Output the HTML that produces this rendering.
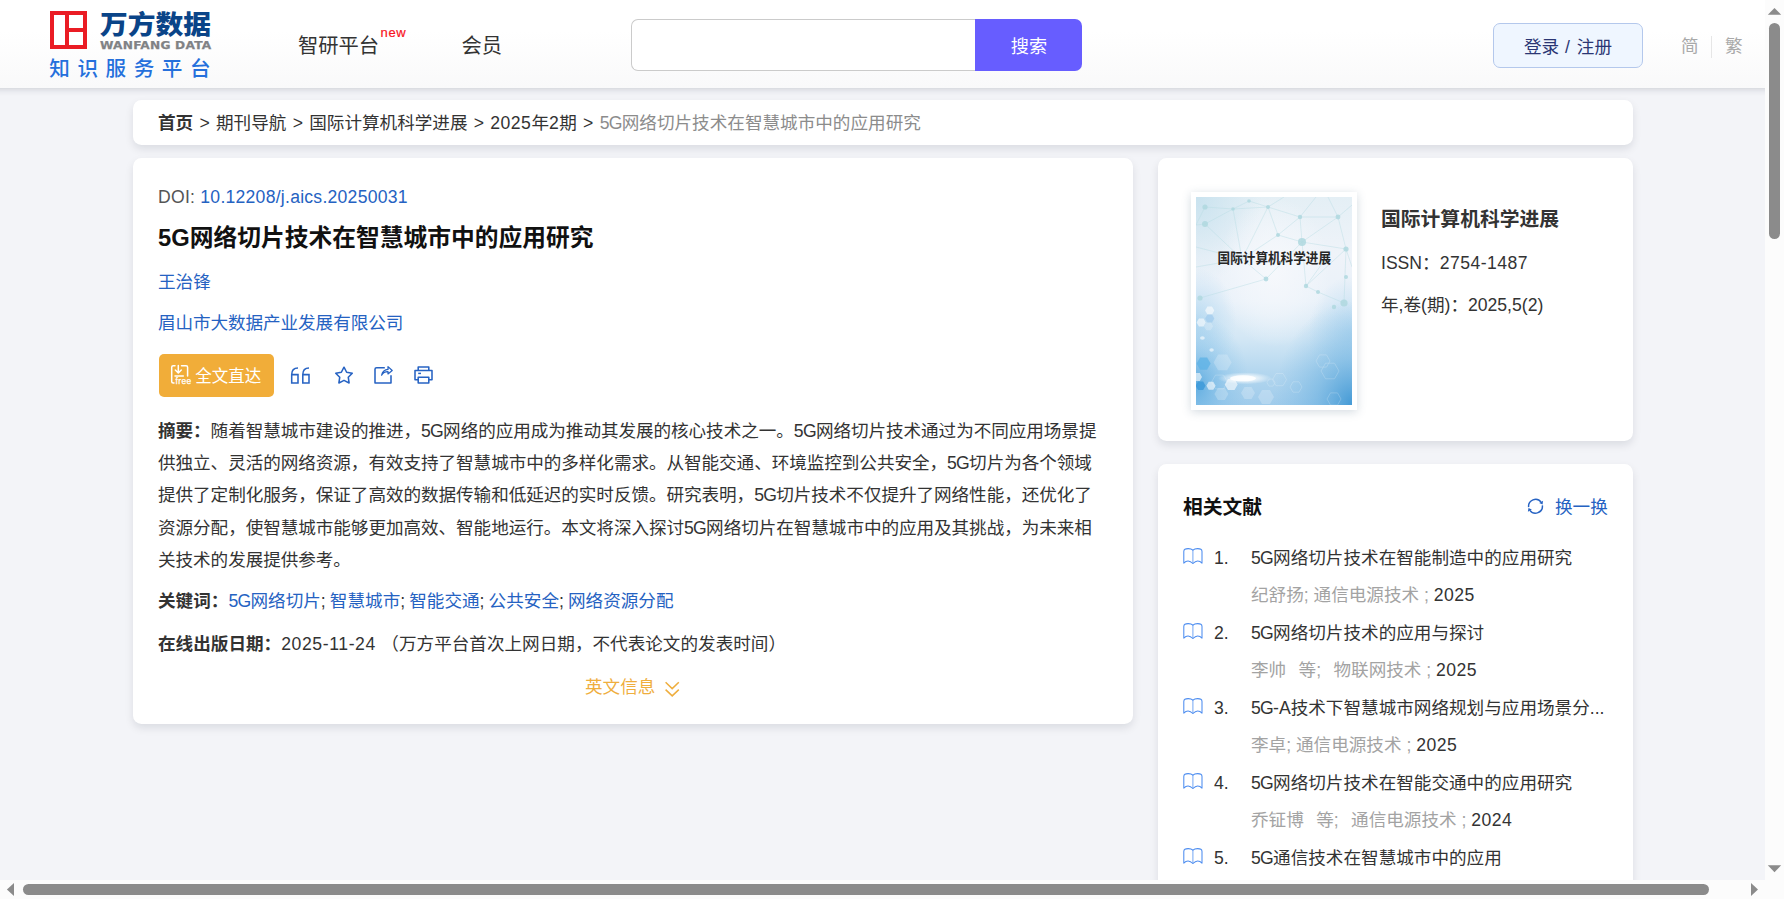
<!DOCTYPE html>
<html lang="zh-CN">
<head>
<meta charset="utf-8">
<title>5G网络切片技术在智慧城市中的应用研究</title>
<style>
*{box-sizing:border-box;margin:0;padding:0}
html,body{width:1784px;height:899px;overflow:hidden}
body{position:relative;background:#fcfcfc;font-family:"Liberation Sans","Noto Sans CJK SC",sans-serif;color:#333;font-size:17.6px}
a{text-decoration:none;color:inherit}
.abs{position:absolute;white-space:nowrap}
#view{position:absolute;left:0;top:0;width:1765px;height:880px;overflow:hidden;background:#f3f4f8}
#hbg{position:absolute;left:-30px;top:0;width:1825px;height:88px;background:linear-gradient(#ffffff 0%,#ffffff 35%,#f9f9fa 100%);box-shadow:0 1px 7px rgba(35,40,60,.2)}
#header{position:absolute;left:0;top:0;width:1765px;height:88px}
.card{position:absolute;background:#fff;border-radius:8.5px;box-shadow:0 4px 9px rgba(10,20,40,.1)}
.blue{color:#2562c2}
.gray{color:#a3a3a3}
b,.b{font-weight:700}
.rn,.rt,.rs{line-height:30px;color:#333}
.rn,.rt{margin-top:.9px}
.rs{color:#a3a3a3}
.dk{color:#333}
.sp{display:inline-block;width:12.4px}
.g{letter-spacing:-.7px}
.d{letter-spacing:.47px}
.sep{display:inline-block;width:22.8px;text-align:center}
</style>
</head>
<body>
<div id="view">

<!-- ===== header ===== -->
<div id="hbg"></div>
<div id="header">
  <!-- logo -->
  <div class="abs" style="left:50px;top:11px;width:37px;height:38px;border:4px solid #ea1c24;background:#fff">
    <div class="abs" style="left:11px;top:0;width:4px;height:30px;background:#ea1c24"></div>
    <div class="abs" style="left:15px;top:13px;width:14px;height:4px;background:#ea1c24"></div>
  </div>
  <div class="abs" id="lg1" style="left:99.5px;top:4.6px;font-size:25.6px;line-height:40px;font-weight:900;color:#0a4488;transform:scaleX(1.085);transform-origin:0 0">万方数据</div>
  <div class="abs" id="lg2" style="left:100px;top:37.8px;font-family:'DejaVu Sans',sans-serif;font-size:10.8px;line-height:16px;font-weight:700;color:#808285;letter-spacing:.2px;transform:scaleX(1.128);transform-origin:0 0;-webkit-text-stroke:.25px #808285">WANFANG DATA</div>
  <div class="abs" id="lg3" style="left:49.3px;top:54px;font-size:20.6px;line-height:30px;color:#2570dc;letter-spacing:7.55px;font-weight:500">知识服务平台</div>

  <div class="abs" id="nav1" style="left:298px;top:30.7px;font-size:20.3px;line-height:30px;color:#333">智研平台</div>
  <div class="abs" id="navnew" style="left:380.6px;top:24.7px;font-size:13px;line-height:16px;color:#f8131c;letter-spacing:.65px;-webkit-text-stroke:.2px #f8131c">new</div>
  <div class="abs" id="nav2" style="left:461.4px;top:30.7px;font-size:20.3px;line-height:30px;color:#333">会员</div>

  <div class="abs" style="left:631px;top:19px;width:346px;height:52px;border:1px solid #cbcbcb;border-right:none;border-radius:7px 0 0 7px;background:#fff"></div>
  <div class="abs" id="sbtn" style="left:975.4px;top:19px;width:107.1px;height:52px;border-radius:0 7px 7px 0;background:#675dff;color:#fff;font-size:18.2px;line-height:56.2px;text-align:center">搜索</div>

  <div class="abs" id="login" style="left:1493px;top:23px;width:150px;height:45px;border:1px solid #b4c8ec;border-radius:7px;background:#eff6ff;color:#2b3674;font-size:17.6px;line-height:46px;text-align:center">登录<span style="letter-spacing:1px"> / </span>注册</div>
  <div class="abs" id="jian" style="left:1681px;top:31px;font-size:17.6px;line-height:30px;color:#a9a9a9">简</div>
  <div class="abs" style="left:1711px;top:36px;width:1px;height:22px;background:#e6e6e6"></div>
  <div class="abs" id="fan" style="left:1725px;top:31px;font-size:17.6px;line-height:30px;color:#a9a9a9">繁</div>
</div>

<!-- ===== breadcrumb ===== -->
<div class="card" id="bc" style="left:133px;top:100px;width:1500px;height:44.5px">
  <div class="abs" id="bctext" style="left:25px;top:8px;font-size:17.6px;line-height:30px;color:#333"><b>首页</b><span class="sep">&gt;</span>期刊导航<span class="sep">&gt;</span>国际计算机科学进展<span class="sep">&gt;</span><span class="d">2025</span>年<span class="d">2</span>期<span class="sep">&gt;</span><span style="color:#8c8c8c"><span class="g">5G</span>网络切片技术在智慧城市中的应用研究</span></div>
</div>

<!-- ===== main card ===== -->
<div class="card" id="main" style="left:133px;top:158px;width:1000px;height:566px">
  <div class="abs" id="doi" style="left:25px;top:24px;line-height:30px;color:#555"><span style="letter-spacing:.25px">DOI: </span><span class="blue" style="letter-spacing:.25px">10.12208/j.aics.20250031</span></div>
  <div class="abs" id="title" style="left:25px;top:60px;font-size:23.76px;line-height:40px;font-weight:700;color:#111">5G网络切片技术在智慧城市中的应用研究</div>
  <div class="abs blue" id="author" style="left:25px;top:109px;line-height:30px">王治锋</div>
  <div class="abs blue" id="org" style="left:25px;top:150.2px;line-height:30px;letter-spacing:-.08px">眉山市大数据产业发展有限公司</div>

  <div class="abs" id="ftbtn" style="left:26px;top:196px;width:115px;height:43px;border-radius:5px;background:#f1ad39"></div>
  <svg class="abs" style="left:37px;top:206px" width="24" height="22" viewBox="0 0 24 22" fill="none" stroke="#fff" stroke-width="1.5" stroke-linecap="round" stroke-linejoin="round">
    <path d="M5 1.8H3.2Q1.7 1.8 1.7 3.3V17.6Q1.7 19.1 3.2 19.1H4"/>
    <path d="M11.5 1.8H16.1Q17.6 1.8 17.6 3.3V12"/>
    <path d="M8.3 1.5V8.6M5.3 6L8.3 9L11.3 6M5 12H13.3"/>
    <text x="5.5" y="19.9" font-family="Liberation Sans, sans-serif" font-size="8.4" font-weight="400" fill="#fff" stroke="#fff" stroke-width=".25" letter-spacing=".4">free</text>
  </svg>
  <div class="abs" id="fttext" style="left:62.3px;top:202.8px;font-size:16.5px;line-height:30px;color:#fff">全文直达</div>

  <!-- quote -->
  <svg class="abs" style="left:156px;top:207px" width="24" height="22" viewBox="0 0 24 22" fill="none" stroke="#2763c3" stroke-width="1.55">
    <path d="M9 2.9Q2.7 2.9 2.7 9.6V17.9H9V9.6H2.7"/>
    <path d="M20 2.9Q13.8 2.9 13.8 9.6V17.9H20V9.6H13.8"/>
  </svg>
  <!-- star -->
  <svg class="abs" style="left:200px;top:206px" width="24" height="24" viewBox="0 0 24 24" fill="none" stroke="#2763c3" stroke-width="1.55" stroke-linejoin="round">
    <path d="M11.00 3.20L13.65 8.26L19.27 9.21L15.28 13.29L16.11 18.94L11.00 16.40L5.89 18.94L6.72 13.29L2.73 9.21L8.35 8.26Z"/>
  </svg>
  <!-- share -->
  <svg class="abs" style="left:240px;top:206px" width="24" height="24" viewBox="0 0 24 24" fill="none" stroke="#2763c3" stroke-width="1.55" stroke-linejoin="round">
    <path d="M11.8 3.7H3.6Q2 3.7 2 5.3V19H18V11.2"/>
    <path d="M8.6 11.2Q10 5.6 15 5.4V2.6L19.2 6.5L15 9.9V7.6Q11 7.4 8.6 11.2Z" stroke-width="1.25"/>
  </svg>
  <!-- print -->
  <svg class="abs" style="left:280px;top:206px" width="24" height="24" viewBox="0 0 24 24" fill="none" stroke="#2763c3" stroke-width="1.55" stroke-linejoin="round">
    <path d="M5.2 6.5V3H15.8V6.5"/>
    <path d="M5.2 15.8H2V6.5H19V15.8H15.8"/>
    <path d="M5.2 13.3H15.8V19H5.2Z"/>
    <path d="M5.2 9.4H8" stroke-width="1.5"/>
  </svg>

  <div class="abs" id="abs" style="left:25px;top:256.5px;width:950px;white-space:normal;line-height:32.45px;color:#333;text-align:left;letter-spacing:-.06px"><b>摘要：</b>随着智慧城市建设的推进，<span class="g">5G</span>网络的应用成为推动其发展的核心技术之一。<span class="g">5G</span>网络切片技术通过为不同应用场景提供独立、灵活的网络资源，有效支持了智慧城市中的多样化需求。从智能交通、环境监控到公共安全，<span class="g">5G</span>切片为各个领域提供了定制化服务，保证了高效的数据传输和低延迟的实时反馈。研究表明，<span class="g">5G</span>切片技术不仅提升了网络性能，还优化了资源分配，使智慧城市能够更加高效、智能地运行。本文将深入探讨<span class="g">5G</span>网络切片在智慧城市中的应用及其挑战，为未来相关技术的发展提供参考。</div>

  <div class="abs" id="kw" style="left:25px;top:427.4px;line-height:32.45px"><b>关键词：</b><span class="blue"><span class="g">5G</span>网络切片</span><span style="letter-spacing:-.4px">; </span><span class="blue">智慧城市</span><span style="letter-spacing:-.4px">; </span><span class="blue">智能交通</span><span style="letter-spacing:-.4px">; </span><span class="blue">公共安全</span><span style="letter-spacing:-.4px">; </span><span class="blue">网络资源分配</span></div>
  <div class="abs" id="date" style="left:25px;top:470px;line-height:32.45px"><b>在线出版日期：</b><span style="letter-spacing:.6px">2025-11-24 </span>（万方平台首次上网日期，不代表论文的发表时间）</div>

  <div class="abs" id="enin" style="left:452px;top:514px;line-height:30px;color:#efae3e">英文信息</div>
  <svg class="abs" style="left:530px;top:522px" width="18" height="18" viewBox="0 0 18 18" fill="none" stroke="#efae3e" stroke-width="1.5">
    <path d="M2.6 2.3L9.2 8.6L15.8 2.3M2.6 9.6L9.2 15.9L15.8 9.6"/>
  </svg>
</div>

<!-- ===== journal card ===== -->
<div class="card" id="jc" style="left:1158px;top:158px;width:475px;height:283px">
  <div class="abs" style="left:33px;top:34px;width:166px;height:218px;background:#fff;box-shadow:0 2px 9px rgba(60,90,120,.22)"></div>
  <svg class="abs" id="cover" style="left:38px;top:39px" width="156" height="208" viewBox="0 0 156 208">
    <defs>
      <linearGradient id="cg" x1="0" y1="0" x2="0" y2="1">
        <stop offset="0" stop-color="#e4eff5"/>
        <stop offset="0.28" stop-color="#eff3f9"/>
        <stop offset="0.5" stop-color="#e9f1f9"/>
        <stop offset="0.68" stop-color="#d3e7f5"/>
        <stop offset="0.84" stop-color="#b4d7ef"/>
        <stop offset="1" stop-color="#9fcbeb"/>
      </linearGradient>
      <radialGradient id="cw" cx="0.5" cy="0.36" r="0.36">
        <stop offset="0" stop-color="#f7f9fc" stop-opacity=".9"/>
        <stop offset="0.6" stop-color="#f5f8fc" stop-opacity=".5"/>
        <stop offset="1" stop-color="#f5f8fc" stop-opacity="0"/>
      </radialGradient>
      <radialGradient id="ctl" cx="0" cy="0" r="0.42">
        <stop offset="0" stop-color="#c6e1ee" stop-opacity=".9"/>
        <stop offset="1" stop-color="#c6e1ee" stop-opacity="0"/>
      </radialGradient>
      <radialGradient id="cbr" cx="1" cy="1" r="0.5">
        <stop offset="0" stop-color="#3f97d4" stop-opacity=".95"/>
        <stop offset="0.45" stop-color="#62acde" stop-opacity=".5"/>
        <stop offset="1" stop-color="#7cbbe6" stop-opacity="0"/>
      </radialGradient>
      <radialGradient id="cbl" cx="0" cy="0.9" r="0.34">
        <stop offset="0" stop-color="#52a6de" stop-opacity=".85"/>
        <stop offset="0.55" stop-color="#7cbde8" stop-opacity=".4"/>
        <stop offset="1" stop-color="#8cc5ea" stop-opacity="0"/>
      </radialGradient>
      <radialGradient id="cml" cx="0" cy="0.6" r="0.26">
        <stop offset="0" stop-color="#aad4ef" stop-opacity=".75"/>
        <stop offset="1" stop-color="#aad4ef" stop-opacity="0"/>
      </radialGradient>
      <radialGradient id="cmr" cx="1" cy="0.66" r="0.28">
        <stop offset="0" stop-color="#a8d2ee" stop-opacity=".7"/>
        <stop offset="1" stop-color="#a8d2ee" stop-opacity="0"/>
      </radialGradient>
      <radialGradient id="cglow" cx="0.5" cy="0.5" r="0.5">
        <stop offset="0" stop-color="#ffffff" stop-opacity="1"/>
        <stop offset="0.5" stop-color="#ffffff" stop-opacity=".6"/>
        <stop offset="1" stop-color="#ffffff" stop-opacity="0"/>
      </radialGradient>
    </defs>
    <rect width="156" height="208" fill="url(#cg)"/>
    <rect width="156" height="208" fill="url(#ctl)"/>
    <rect width="156" height="208" fill="url(#cml)"/>
    <rect width="156" height="208" fill="url(#cmr)"/>
    <rect width="156" height="208" fill="url(#cw)"/>
    <rect width="156" height="208" fill="url(#cbl)"/>
    <rect width="156" height="208" fill="url(#cbr)"/>
    <ellipse cx="49" cy="181.3" rx="27" ry="6" fill="url(#cglow)"/><ellipse cx="47" cy="181.3" rx="13" ry="3" fill="#fff" opacity=".85"/>
    <g stroke="#b4dae1" stroke-width=".7" fill="none" opacity=".6">
      <path d="M9 10L37 12L72 10L104 20L142 20L156 8M9 10L0 28L9 27L37 12L53 4L72 10L88 0M104 20L120 0M142 20L132 0M9 27L46 62L72 10M37 12L46 62L82 38L104 20L106 45L142 20L150 52L106 45L82 38L72 10M46 62L0 70M46 62L70 82L106 45L110 89L150 52L156 70M70 82L4 101M110 89L122 95L148 106L150 52M110 89L128 64M0 50L46 62"/>
    </g>
    <g fill="#b0d9e0" opacity=".85">
      <circle cx="9" cy="10" r="2.6"/><circle cx="37" cy="12" r="1.8"/><circle cx="72" cy="10" r="2"/><circle cx="104" cy="20" r="2.2"/><circle cx="142" cy="20" r="2.4"/>
      <circle cx="9" cy="27" r="3"/><circle cx="53" cy="4" r="1.8"/><circle cx="82" cy="38" r="2"/><circle cx="106" cy="45" r="4"/><circle cx="150" cy="52" r="2.6"/>
      <circle cx="70" cy="82" r="2.4"/><circle cx="110" cy="89" r="2.2"/><circle cx="122" cy="95" r="2"/><circle cx="148" cy="106" r="3.6"/><circle cx="4" cy="101" r="2.6"/><circle cx="128" cy="64" r="1.6"/><circle cx="150" cy="80" r="2"/><circle cx="138" cy="110" r="2.2"/>
    </g>
    <g fill="#ffffff" opacity=".6"><path d="M18.3 113.4L16.0 117.4L11.4 117.4L9.1 113.4L11.4 109.4L16.0 109.4Z"/><path d="M9.8 125.6L7.5 129.6L2.9 129.6L0.6 125.6L2.9 121.6L7.5 121.6Z"/><path d="M19.6 188.7L17.3 192.7L12.7 192.7L10.4 188.7L12.7 184.7L17.3 184.7Z"/><path d="M41.7 187.5L38.5 193.1L32.0 193.1L28.7 187.5L31.9 181.9L38.5 181.9Z"/><path d="M6.0 180.0L3.8 183.9L-0.7 183.9L-3.0 180.0L-0.8 176.1L3.8 176.1Z"/><ellipse cx="6.4" cy="141" rx="2.4" ry="1.8"/><ellipse cx="15.6" cy="153" rx="2.2" ry="1.8"/></g>
    <g fill="#ffffff" opacity=".22"><path d="M17.1 129.3L14.8 133.3L10.2 133.3L7.9 129.3L10.2 125.3L14.8 125.3Z"/><path d="M35.6 165.4L31.1 173.2L22.1 173.2L17.6 165.4L22.1 157.6L31.1 157.6Z"/><path d="M32.4 197.0L28.9 203.1L21.9 203.1L18.4 197.0L21.9 190.9L28.9 190.9Z"/><path d="M78.0 200.0L74.0 206.9L66.0 206.9L62.0 200.0L66.0 193.1L74.0 193.1Z"/><path d="M59.0 196.0L55.5 202.1L48.5 202.1L45.0 196.0L48.5 189.9L55.5 189.9Z"/></g>
    <g fill="#9fcbec" opacity=".7"><path d="M18.3 121.4L16.0 125.4L11.4 125.4L9.1 121.4L11.4 117.4L16.0 117.4Z"/></g>
    <path d="M14.6 166.6L11.1 172.7L4.1 172.7L0.6 166.6L4.1 160.5L11.1 160.5Z" fill="#5fb3e6" opacity="0.8"/><path d="M9.6 188.7L7.1 193.0L2.1 193.0L-0.4 188.7L2.1 184.4L7.1 184.4Z" fill="#3d9ad9" opacity="0.85"/>
    <g fill="none" stroke="#ffffff" stroke-width=".7" opacity=".28"><path d="M31.5 185.0L27.5 191.9L19.5 191.9L15.5 185.0L19.5 178.1L27.5 178.1Z"/><path d="M90.5 182.6L87.0 188.7L80.0 188.7L76.5 182.6L80.0 176.5L87.0 176.5Z"/><path d="M79.0 185.6L77.0 189.1L73.0 189.1L71.0 185.6L73.0 182.1L77.0 182.1Z"/><path d="M134.0 164.0L130.5 170.1L123.5 170.1L120.0 164.0L123.5 157.9L130.5 157.9Z"/><path d="M143.0 174.0L138.5 181.8L129.5 181.8L125.0 174.0L129.5 166.2L138.5 166.2Z"/><path d="M145.0 202.0L141.5 208.1L134.5 208.1L131.0 202.0L134.5 195.9L141.5 195.9Z"/><path d="M106.0 190.0L103.0 195.2L97.0 195.2L94.0 190.0L97.0 184.8L103.0 184.8Z"/></g>
    <text x="21.6" y="65.7" textLength="113.4" lengthAdjust="spacingAndGlyphs" font-family="Liberation Sans, Noto Sans CJK SC, sans-serif" font-size="13.8" font-weight="700" fill="#262626">国际计算机科学进展</text>
  </svg>

  <div class="abs" id="jn" style="left:223px;top:46px;font-size:19.8px;line-height:30px;font-weight:700;color:#333">国际计算机科学进展</div>
  <div class="abs" id="issn" style="left:223px;top:90px;line-height:30px;color:#333">ISSN：<span class="d">2754-1487</span></div>
  <div class="abs" id="yv" style="left:223px;top:132px;line-height:30px;color:#333">年,卷(期)：2025,5(2)</div>
</div>

<!-- ===== related card ===== -->
<div class="card" id="rc" style="left:1158px;top:464px;width:475px;height:470px">
  <div class="abs" id="rh" style="left:25px;top:28px;font-size:19.8px;line-height:30px;font-weight:700;color:#111">相关文献</div>
  <svg class="abs" style="left:368px;top:33.4px" width="19" height="19" viewBox="0 0 19 19" fill="none" stroke="#2763c3" stroke-width="1.45">
    <path d="M2.65 10.09A6.9 6.9 0 0 1 15.08 5.19"/>
    <path d="M16.35 8.41A6.9 6.9 0 0 1 3.92 13.31"/>
    <path d="M16.53 7.62L17.10 3.82L13.21 6.07Z" fill="#2763c3" stroke="none"/>
    <path d="M2.47 10.88L1.90 14.68L5.79 12.43Z" fill="#2763c3" stroke="none"/>
  </svg>
  <div class="abs blue" id="hyh" style="left:397px;top:27.8px;line-height:30px">换一换</div>

  <svg class="abs bk" style="left:25.2px;top:84.4px" width="21" height="18" viewBox="0 0 21 18" fill="none" stroke="#4d8df0" stroke-width="1.05" stroke-linejoin="round"><path d="M9.9 2.1Q8.3 0.6 5.2 0.6Q0.8 0.6 0.8 3.4V15.1Q5 10.6 9.9 15.5Q14.8 10.6 19 15.1V3.4Q19 0.6 14.6 0.6Q11.5 0.6 9.9 2.1Z"/><path d="M9.9 2.1V15.5" stroke-opacity=".75"/></svg>
  <div class="abs rn" style="left:56px;top:78px">1.</div>
  <div class="abs rt" style="left:93px;top:78px"><span class="g">5G</span>网络切片技术在智能制造中的应用研究</div>
  <div class="abs rs" style="left:93px;top:115.5px">纪舒扬; 通信电源技术 ; <span class="dk d">2025</span></div>
  <svg class="abs bk" style="left:25.2px;top:159.4px" width="21" height="18" viewBox="0 0 21 18" fill="none" stroke="#4d8df0" stroke-width="1.05" stroke-linejoin="round"><path d="M9.9 2.1Q8.3 0.6 5.2 0.6Q0.8 0.6 0.8 3.4V15.1Q5 10.6 9.9 15.5Q14.8 10.6 19 15.1V3.4Q19 0.6 14.6 0.6Q11.5 0.6 9.9 2.1Z"/><path d="M9.9 2.1V15.5" stroke-opacity=".75"/></svg>
  <div class="abs rn" style="left:56px;top:153px">2.</div>
  <div class="abs rt" style="left:93px;top:153px"><span class="g">5G</span>网络切片技术的应用与探讨</div>
  <div class="abs rs" style="left:93px;top:190.5px">李帅<span class="sp"></span>等;<span class="sp"></span>物联网技术 ; <span class="dk d">2025</span></div>
  <svg class="abs bk" style="left:25.2px;top:234.4px" width="21" height="18" viewBox="0 0 21 18" fill="none" stroke="#4d8df0" stroke-width="1.05" stroke-linejoin="round"><path d="M9.9 2.1Q8.3 0.6 5.2 0.6Q0.8 0.6 0.8 3.4V15.1Q5 10.6 9.9 15.5Q14.8 10.6 19 15.1V3.4Q19 0.6 14.6 0.6Q11.5 0.6 9.9 2.1Z"/><path d="M9.9 2.1V15.5" stroke-opacity=".75"/></svg>
  <div class="abs rn" style="left:56px;top:228px">3.</div>
  <div class="abs rt" style="left:93px;top:228px"><span class="g">5G</span>-A技术下智慧城市网络规划与应用场景分...</div>
  <div class="abs rs" style="left:93px;top:265.5px">李卓; 通信电源技术 ; <span class="dk d">2025</span></div>
  <svg class="abs bk" style="left:25.2px;top:309.4px" width="21" height="18" viewBox="0 0 21 18" fill="none" stroke="#4d8df0" stroke-width="1.05" stroke-linejoin="round"><path d="M9.9 2.1Q8.3 0.6 5.2 0.6Q0.8 0.6 0.8 3.4V15.1Q5 10.6 9.9 15.5Q14.8 10.6 19 15.1V3.4Q19 0.6 14.6 0.6Q11.5 0.6 9.9 2.1Z"/><path d="M9.9 2.1V15.5" stroke-opacity=".75"/></svg>
  <div class="abs rn" style="left:56px;top:303px">4.</div>
  <div class="abs rt" style="left:93px;top:303px"><span class="g">5G</span>网络切片技术在智能交通中的应用研究</div>
  <div class="abs rs" style="left:93px;top:340.5px">乔钲博<span class="sp"></span>等;<span class="sp"></span>通信电源技术 ; <span class="dk d">2024</span></div>
  <svg class="abs bk" style="left:25.2px;top:384.4px" width="21" height="18" viewBox="0 0 21 18" fill="none" stroke="#4d8df0" stroke-width="1.05" stroke-linejoin="round"><path d="M9.9 2.1Q8.3 0.6 5.2 0.6Q0.8 0.6 0.8 3.4V15.1Q5 10.6 9.9 15.5Q14.8 10.6 19 15.1V3.4Q19 0.6 14.6 0.6Q11.5 0.6 9.9 2.1Z"/><path d="M9.9 2.1V15.5" stroke-opacity=".75"/></svg>
  <div class="abs rn" style="left:56px;top:378px">5.</div>
  <div class="abs rt" style="left:93px;top:378px"><span class="g">5G</span>通信技术在智慧城市中的应用</div>
  <div class="abs rs" style="left:93px;top:415.5px">&nbsp;</div>
</div>

</div><!-- /view -->

<!-- ===== scrollbars ===== -->
<div class="abs" style="left:1765px;top:0;width:19px;height:899px;background:#fcfcfc"></div>
<div class="abs" style="left:0;top:880px;width:1784px;height:19px;background:#fcfcfc"></div>
<div class="abs" style="left:1769px;top:23px;width:11px;height:215.7px;border-radius:5.5px;background:#8b8b8b"></div>
<div class="abs" style="left:23px;top:884px;width:1686px;height:11px;border-radius:5.5px;background:#8b8b8b"></div>
<svg class="abs" style="left:1765px;top:0" width="19" height="899" viewBox="0 0 19 899"><path d="M9.5 8L16.2 14.8H2.8Z" fill="#8b8b8b"/><path d="M9.5 872.2L16.2 865.2H2.8Z" fill="#8b8b8b"/></svg>
<svg class="abs" style="left:0;top:880px" width="1784" height="19" viewBox="0 0 1784 19"><path d="M6.9 9.5L14 3V16Z" fill="#8b8b8b"/><path d="M1758 9.5L1751 3V16Z" fill="#8b8b8b"/></svg>

</body>
</html>
